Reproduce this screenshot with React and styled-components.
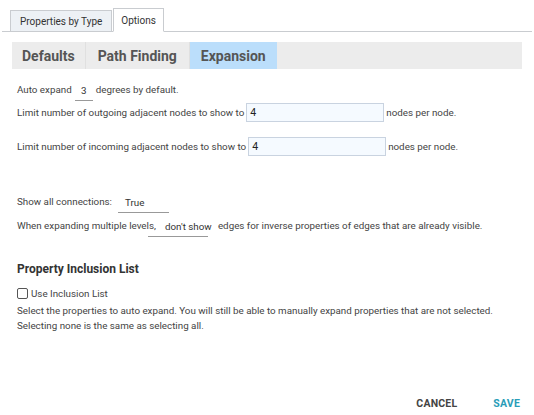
import React from 'react';
import styled, { createGlobalStyle } from 'styled-components';

const Global = createGlobalStyle`
  html, body { margin: 0; padding: 0; background: #fff; }
  body { font-family: Roboto, "Liberation Sans", Arial, sans-serif; color: #444; }
`;

const Page = styled.div`
  width: 534px;
  height: 415px;
  display: flex;
  flex-direction: column;
  box-sizing: border-box;
  padding-top: 8px;
  position: relative;
`;

const TopTabs = styled.div`
  display: flex;
  align-items: flex-end;
  height: 23px;
  margin: 0 2px 0 2px;
  padding-left: 8px;
  border-bottom: 1px solid #c9ccd0;
`;

const TopTab = styled.div`
  box-sizing: border-box;
  height: ${p => (p.$active ? '24px' : '22px')};
  margin-bottom: -1px;
  padding: 0 ${p => p.$pad || 9}px;
  display: flex;
  align-items: center;
  font-size: 10px;
  color: #333;
  background: ${p => (p.$active ? '#fff' : '#edf1f5')};
  border: 1px solid #c9ccd0;
  border-bottom: ${p => (p.$active ? '1px solid #fff' : '1px solid #c9ccd0')};
  margin-right: 1px;
`;

const SubTabs = styled.div`
  display: flex;
  height: 27px;
  margin: 10px 12px 0 12px;
  background: #ececec;
`;

const SubTab = styled.div`
  padding: 0 ${p => p.$pad || 12}px;
  display: flex;
  align-items: center;
  font-size: 14px;
  font-weight: 700;
  color: #555;
  background: ${p => (p.$active ? '#bbdefb' : 'transparent')};
  border-right: ${p => (p.$active ? 'none' : '1px solid #e0e0e0')};
`;

const Body = styled.div`
  padding: 9px 17px 0 17px;
  font-size: 9.8px;
  color: #444;
`;

const Line = styled.div`
  display: flex;
  align-items: center;
  height: ${p => p.$h || 20}px;
  margin-top: ${p => p.$mt || 0}px;
  white-space: nowrap;
`;

const Pick = styled.span`
  display: inline-block;
  width: ${p => p.$w}px;
  text-align: ${p => p.$align || 'center'};
  padding-left: ${p => p.$pl || 0}px;
  box-sizing: border-box;
  margin: 8px ${p => p.$mr ?? 6}px 0 ${p => p.$ml ?? 6}px;
  border-bottom: 1px solid #999;
  padding-bottom: 4px;
  color: #333;
  white-space: nowrap;
  overflow: visible;
`;

const NumInput = styled.div`
  width: 138px;
  height: 19px;
  box-sizing: border-box;
  border: 1px solid #c9d3e0;
  background: #f5faff;
  margin: 0 2px 0 2px;
  padding-left: 3px;
  display: flex;
  align-items: center;
  font-size: 10.5px;
  color: #222;
`;

const Heading = styled.div`
  font-size: 12px;
  font-weight: 700;
  color: #333;
  margin-top: 25px;
`;

const Check = styled.span`
  width: 9px;
  height: 9px;
  border: 1px solid #555;
  border-radius: 2px;
  margin-right: 3px;
  display: inline-block;
`;

const Para = styled.p`
  margin: 1px 0 0 0;
  line-height: 15px;
`;

const Footer = styled.div`
  position: absolute;
  right: 14px;
  bottom: 5px;
  display: flex;
  gap: 36px;
  font-size: 10.5px;
  font-weight: 700;
  letter-spacing: 0.2px;
`;

const Btn = styled.span`
  color: ${p => (p.$primary ? '#2a9db8' : '#444')};
`;

export default function App() {
  return (
    <Page>
      <Global />
      <TopTabs>
        <TopTab $pad={9}>Properties by Type</TopTab>
        <TopTab $pad={7} $active>Options</TopTab>
      </TopTabs>
      <SubTabs>
        <SubTab $pad={10}>Defaults</SubTab>
        <SubTab $pad={12}>Path Finding</SubTab>
        <SubTab $pad={11} $active>Expansion</SubTab>
      </SubTabs>
      <Body>
        <Line $h={22}>
          Auto expand<Pick $w={18} $ml={3} $mr={3}>3</Pick>degrees by default.
        </Line>
        <Line $h={24}>
          Limit number of outgoing adjacent nodes to show to
          <NumInput>4</NumInput>nodes per node.
        </Line>
        <Line $h={24} $mt={10}>
          Limit number of incoming adjacent nodes to show to
          <NumInput>4</NumInput>nodes per node.
        </Line>
        <Line $h={24} $mt={31}>
          Show all connections:<Pick $w={51} $align="left" $pl={7} $ml={6}>True</Pick>
        </Line>
        <Line $h={24}>
          When expanding multiple levels,<Pick $w={60} $align="left" $pl={17} $ml={-8} $mr={10}>don't show</Pick>edges for inverse properties of edges that are already visible.
        </Line>
        <Heading>Property Inclusion List</Heading>
        <Line $h={18} $mt={8}>
          <Check />Use Inclusion List
        </Line>
        <Para>
          Select the properties to auto expand. You will still be able to manually expand properties that are not selected.
          <br />
          Selecting none is the same as selecting all.
        </Para>
      </Body>
      <Footer>
        <Btn>CANCEL</Btn>
        <Btn $primary>SAVE</Btn>
      </Footer>
    </Page>
  );
}
